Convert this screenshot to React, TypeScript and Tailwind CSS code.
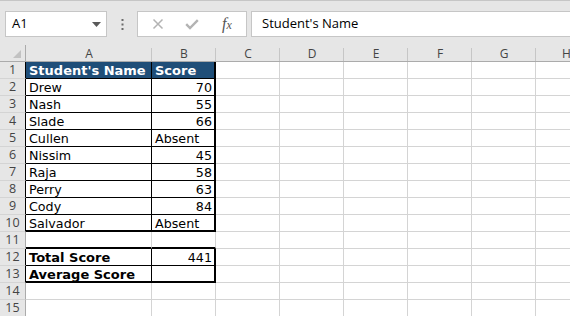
import React from "react";

type Cell = { text?: string; bold?: boolean; right?: boolean; head?: boolean; r?: "n" | "b" | "B"; b?: "n" | "b" | "B" };

const rows: { a: Cell; b: Cell; hb?: boolean }[] = [
  { a: { text: "Student's Name", bold: true, head: true, r: "b", b: "b" }, b: { text: "Score", bold: true, head: true, r: "B", b: "b" }, hb: true },
  { a: { text: "Drew", r: "b", b: "b" }, b: { text: "70", right: true, r: "B", b: "b" }, hb: true },
  { a: { text: "Nash", r: "b", b: "b" }, b: { text: "55", right: true, r: "B", b: "b" }, hb: true },
  { a: { text: "Slade", r: "b", b: "b" }, b: { text: "66", right: true, r: "B", b: "b" }, hb: true },
  { a: { text: "Cullen", r: "b", b: "b" }, b: { text: "Absent", r: "B", b: "b" }, hb: true },
  { a: { text: "Nissim", r: "b", b: "b" }, b: { text: "45", right: true, r: "B", b: "b" }, hb: true },
  { a: { text: "Raja", r: "b", b: "b" }, b: { text: "58", right: true, r: "B", b: "b" }, hb: true },
  { a: { text: "Perry", r: "b", b: "b" }, b: { text: "63", right: true, r: "B", b: "b" }, hb: true },
  { a: { text: "Cody", r: "b", b: "b" }, b: { text: "84", right: true, r: "B", b: "b" }, hb: true },
  { a: { text: "Salvador", r: "b", b: "B" }, b: { text: "Absent", r: "B", b: "B" }, hb: true },
  { a: { b: "B" }, b: { b: "B" } },
  { a: { text: "Total Score", bold: true, r: "b", b: "b" }, b: { text: "441", right: true, r: "B", b: "b" }, hb: true },
  { a: { text: "Average Score", bold: true, r: "b", b: "B" }, b: { r: "B", b: "B" }, hb: true },
  { a: {}, b: {} },
  { a: {}, b: {} },
];

function cls(c: Cell, w: string) {
  const parts = [w, "h-full shrink-0 overflow-hidden whitespace-nowrap px-[3px] leading-[17px]"];
  if (c.r === "b") parts.push("border-r border-r-black");
  else if (c.r === "B") parts.push("border-r-2 border-r-black");
  else parts.push("border-r border-r-[#d4d4d4]");
  if (c.b === "b") parts.push("border-b border-b-black");
  else if (c.b === "B") parts.push("border-b-2 border-b-black");
  else parts.push("border-b border-b-[#d4d4d4]");
  if (c.bold) parts.push("font-bold text-[13px]");
  else parts.push("text-[12.7px]");
  if (c.right) parts.push("text-right pr-[2px]");
  if (c.head) parts.push("bg-[#1f4e78] text-white");
  else parts.push("bg-white text-black");
  return parts.join(" ");
}

const cols = ["C", "D", "E", "F", "G"];

export default function App() {
  return (
    <div className="w-[570px] h-[316px] overflow-hidden bg-[#e6e6e6] border-t border-t-[#c6c6c6] font-['Open_Sans',sans-serif]">
      {/* formula bar */}
      <div className="flex items-stretch h-[26px] mt-[10px]">
        <div className="ml-[5px] w-[102px] bg-white border border-[#c6c6c6] flex items-center justify-between pl-[6px] pr-[5px]">
          <span className="text-[13px] text-black">A1</span>
          <svg width="9" height="5" viewBox="0 0 9 5"><path d="M0 0 L9 0 L4.5 5 Z" fill="#595959" /></svg>
        </div>
        <div className="w-[30px] flex items-center justify-center">
          <svg width="3" height="11" viewBox="0 0 3 11">
            <rect x="0.5" y="0" width="2" height="2" fill="#6b6b6b" />
            <rect x="0.5" y="4.5" width="2" height="2" fill="#6b6b6b" />
            <rect x="0.5" y="9" width="2" height="2" fill="#6b6b6b" />
          </svg>
        </div>
        <div className="w-[110px] bg-white border border-[#c6c6c6] flex items-center">
          <svg className="ml-[14px]" width="12" height="12" viewBox="0 0 12 12">
            <path d="M1.5 1.5 L10.5 10.5 M10.5 1.5 L1.5 10.5" stroke="#b3b3b3" strokeWidth="1.5" />
          </svg>
          <svg className="ml-[21px]" width="14" height="11" viewBox="0 0 14 11">
            <path d="M1.2 5.2 L5 9 L12.8 1.2" stroke="#b3b3b3" strokeWidth="2.4" fill="none" />
          </svg>
          <span className="ml-[23px] text-[16px] italic text-[#555] font-['Liberation_Serif',serif] leading-none">
            f<span className="text-[12px]">x</span>
          </span>
        </div>
        <div className="ml-[4px] flex-1 bg-white border-y border-l border-[#c6c6c6] flex items-center pl-[10px]">
          <span className="text-[13px] text-black">Student's Name</span>
        </div>
      </div>
      {/* column header */}
      <div className="flex h-[17px] mt-[8px] border-b border-b-[#ababab] text-[12px] text-[#444]">
        <div className="relative w-[26px] shrink-0 border-r border-r-[#ababab]">
          <svg className="absolute right-[4px] bottom-[3px]" width="8" height="8" viewBox="0 0 8 8"><path d="M8 0 L8 8 L0 8 Z" fill="#c2c2c2" /></svg>
        </div>
        <div className="relative w-[126px] shrink-0 flex items-center justify-center pt-[2px] after:absolute after:right-0 after:bottom-0 after:h-[13px] after:w-px after:bg-[#c6c6c6]">A</div>
        <div className="relative w-[64px] shrink-0 flex items-center justify-center pt-[2px] after:absolute after:right-0 after:bottom-0 after:h-[13px] after:w-px after:bg-[#c6c6c6]">B</div>
        {cols.map((c) => (
          <div key={c} className="relative w-[64px] shrink-0 flex items-center justify-center pt-[2px] after:absolute after:right-0 after:bottom-0 after:h-[13px] after:w-px after:bg-[#c6c6c6]">{c}</div>
        ))}
        <div className="flex-1 pl-[26px] pt-[2px] flex items-center">H</div>
      </div>
      {/* rows */}
      <div className="font-['DejaVu_Sans',sans-serif]">
        {rows.map((r, i) => (
          <div key={i} className="flex h-[17px]">
            <div className={`w-[26px] shrink-0 h-full bg-[#e6e6e6] border-b border-b-[#d4d4d4] border-r ${r.hb ? "border-r-black" : "border-r-[#ababab]"} flex items-center justify-center text-[12.5px] text-[#444] font-['Open_Sans',sans-serif]`}>
              {i + 1}
            </div>
            <div className={cls(r.a, "w-[126px]")}>{r.a.text}</div>
            <div className={cls(r.b, "w-[64px]")}>{r.b.text}</div>
            {cols.map((c) => (
              <div key={c} className="w-[64px] shrink-0 h-full bg-white border-r border-b border-[#d4d4d4]" />
            ))}
            <div className="flex-1 h-full bg-white border-b border-[#d4d4d4]" />
          </div>
        ))}
      </div>
    </div>
  );
}
